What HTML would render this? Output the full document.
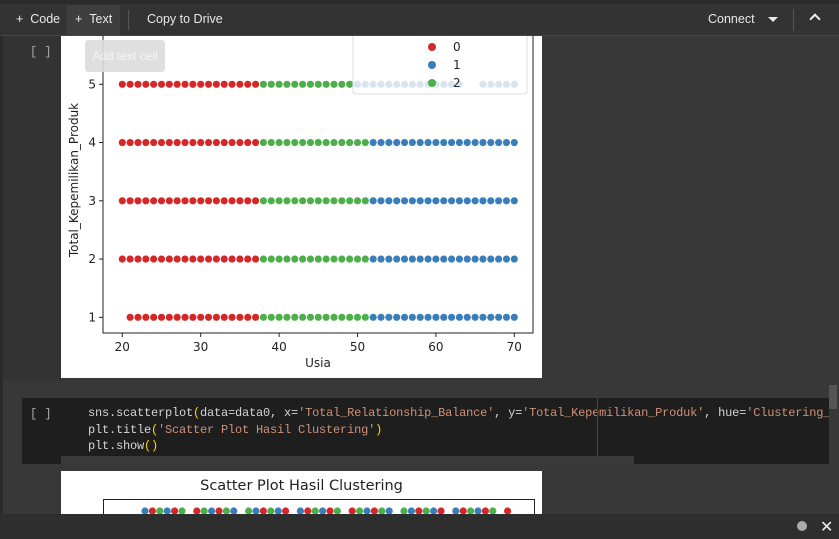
<!DOCTYPE html>
<html><head><style>
body{margin:0;width:839px;height:539px;overflow:hidden;background:#383838;font-family:"Liberation Sans",sans-serif;position:relative}
.a{position:absolute}
.tb{color:#e8e8e8;font-size:12.5px}
.code{font-family:"Liberation Mono",monospace;font-size:12px;letter-spacing:-0.2px;color:#d4d4d4;white-space:pre;line-height:16.5px}
.s{color:#ce9178}.p{color:#ffd700}
</style></head><body>
<div class="a" style="left:0;top:0;width:839px;height:4px;background:#2a2a2a"></div>
<div class="a" style="left:0;top:4px;width:839px;height:31px;background:#333;border-bottom:1px solid #444"></div>
<div class="a" style="left:67px;top:5px;width:53px;height:30px;background:#3e3e3e"></div>
<div class="a tb" style="left:16px;top:12px">+&nbsp;&nbsp;Code</div>
<div class="a tb" style="left:75px;top:12px">+&nbsp;&nbsp;Text</div>
<div class="a" style="left:128px;top:10px;width:1px;height:20px;background:#555"></div>
<div class="a tb" style="left:147px;top:12px">Copy to Drive</div>
<div class="a tb" style="left:708px;top:12px">Connect</div>
<div class="a" style="left:768px;top:17px;width:0;height:0;border-left:5px solid transparent;border-right:5px solid transparent;border-top:5px solid #e8e8e8"></div>
<div class="a" style="left:793px;top:9px;width:1px;height:22px;background:#555"></div>
<div class="a" style="left:811px;top:15px;width:6px;height:6px;border-left:2px solid #eee;border-top:2px solid #eee;transform:rotate(45deg)"></div>
<div class="a" style="left:0;top:36px;width:3px;height:478px;background:#2a2a2a"></div>
<div class="a" style="left:3px;top:36px;width:58px;height:345px;background:#333"></div>
<div class="a" style="left:30px;top:45px;color:#aaa;font-family:'Liberation Mono',monospace;font-size:12px">[ ]</div>
<svg class="a" style="left:61px;top:36px" width="481" height="342" viewBox="61 36 481 342">
<rect x="61" y="36" width="481" height="342" fill="#fff"/>
<g id="dots"></g>
<rect x="353" y="30" width="174" height="64" rx="3" fill="#fff" fill-opacity="0.8" stroke="#ddd"/>
<circle cx="432" cy="47" r="4" fill="#d62728"/><circle cx="432" cy="65" r="4" fill="#3a7dbb"/><circle cx="432" cy="83" r="4" fill="#4daf4a"/>
<g font-family="DejaVu Sans" font-size="12" fill="#222"><text x="453" y="51">0</text><text x="453" y="69">1</text><text x="453" y="87">2</text></g>
<path d="M103 30V333H533V30" fill="none" stroke="#222" stroke-width="1"/>
<g id="ticks" font-family="DejaVu Sans" font-size="12" fill="#222"></g>
<text x="318" y="367" font-family="DejaVu Sans" font-size="12" fill="#222" text-anchor="middle">Usia</text>
<text transform="translate(78,180) rotate(-90)" font-family="DejaVu Sans" font-size="12" fill="#222" text-anchor="middle">Total_Kepemilikan_Produk</text>
</svg>
<div class="a" style="left:85px;top:40px;width:80px;height:32px;background:rgba(220,220,220,0.9);border-radius:3px;color:#f4f4f4;font-size:12px;line-height:32px;text-align:center">Add text cell</div>
<div class="a" style="left:22px;top:398px;width:807px;height:66px;background:#1e1e1e"></div>
<div class="a" style="left:30px;top:407px;color:#aaa;font-family:'Liberation Mono',monospace;font-size:12px">[ ]</div>
<div class="a code" style="left:88px;top:405px;width:741px;overflow:hidden">sns.scatterplot<span class="p">(</span>data=data0, x=<span class="s">'Total_Relationship_Balance'</span>, y=<span class="s">'Total_Kepemilikan_Produk'</span>, hue=<span class="s">'Clustering_KMe</span>
plt.title<span class="p">(</span><span class="s">'Scatter Plot Hasil Clustering'</span><span class="p">)</span>
plt.show<span class="p">()</span></div>
<div class="a" style="left:597px;top:398px;width:1px;height:66px;background:#444"></div>
<div class="a" style="left:61px;top:456px;width:573px;height:8px;background:#3a3a3a"></div>
<div class="a" style="left:829px;top:385px;width:8px;height:24px;background:#555"></div>
<div class="a" style="left:61px;top:471px;width:481px;height:43px;background:#fff"></div>
<div class="a" style="left:61px;top:478px;width:481px;text-align:center;font-family:'DejaVu Sans',sans-serif;font-size:14.5px;color:#222">Scatter Plot Hasil Clustering</div>
<div class="a" style="left:103px;top:499px;width:430px;height:20px;border:1px solid #222"></div>
<svg class="a" style="left:140px;top:507px" width="380" height="8" id="bd"></svg>
<div class="a" style="left:0;top:514px;width:839px;height:25px;background:#2e2e2e"></div>
<div class="a" style="left:797px;top:521px;width:10px;height:10px;border-radius:50%;background:#aaa"></div>
<div class="a" style="left:820px;top:517px;color:#eee;font-size:16px">✕</div>
<script>
var g=document.getElementById('dots'),s='';
function X(a){return 122.3+(a-20)*7.84}function Y(v){return 317.3-(v-1)*58.25}
for(var v=1;v<=5;v++){for(var a=(v==1?21:20);a<=70;a++){
 if(v==5&&(a==64||a==65))continue;
 var c=a<=37?'#d62728':(a<=51?'#4daf4a':'#3a7dbb');
 if(v==5&&a>=50)c='#3a7dbb';
 s+='<circle cx="'+X(a)+'" cy="'+Y(v)+'" r="3.8" fill="'+c+'" stroke="#fff" stroke-width="0.5"/>';}}
g.innerHTML=s;
var t='';for(var v=1;v<=5;v++){t+='<line x1="99" x2="103" y1="'+Y(v)+'" y2="'+Y(v)+'" stroke="#222"/><text x="96" y="'+(Y(v)+4)+'" text-anchor="end">'+v+'</text>';}
for(var a=20;a<=70;a+=10){t+='<line y1="333" y2="337" x1="'+X(a)+'" x2="'+X(a)+'" stroke="#222"/><text y="351" x="'+X(a)+'" text-anchor="middle">'+a+'</text>';}
document.getElementById('ticks').innerHTML=t;
var cs=['#3a7dbb','#4daf4a','#d62728'],b='';for(var i=0;i<50;i++){if(i%7==6)continue;b+='<circle cx="'+(5+i*7.4)+'" cy="4" r="3.6" fill="'+cs[(i*5)%3]+'"/>';}
document.getElementById('bd').innerHTML=b;
</script>
</body></html>
